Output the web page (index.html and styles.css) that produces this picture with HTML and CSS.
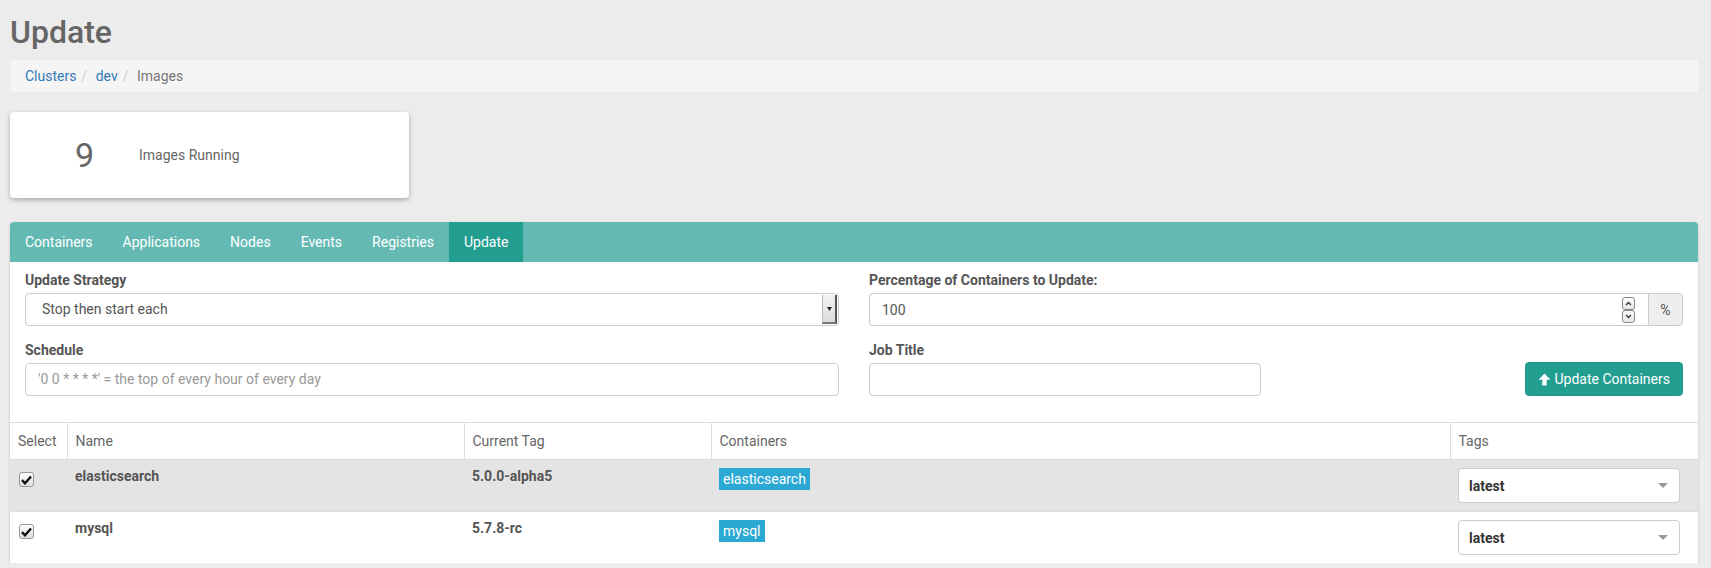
FILE: index.html
```html
<!DOCTYPE html>
<html lang="en">
<head>
<meta charset="utf-8">
<title>Update</title>
<link rel="stylesheet" href="styles.css">
</head>
<body>
<div class="page">
  <h1 class="title">Update</h1>
  <ol class="breadcrumb">
    <li><a href="#">Clusters</a></li>
    <li><a href="#">dev</a></li>
    <li class="active">Images</li>
  </ol>

  <div class="stat-card">
    <div class="stat-num">9</div>
    <div class="stat-label">Images Running</div>
  </div>

  <div class="panel">
    <ul class="tabs">
      <li class="tab">Containers</li>
      <li class="tab">Applications</li>
      <li class="tab">Nodes</li>
      <li class="tab">Events</li>
      <li class="tab">Registries</li>
      <li class="tab active">Update</li>
    </ul>
    <div class="panel-body">
      <div class="form-grid">
        <div class="field">
          <label class="label">Update Strategy</label>
          <div class="native-select">
            <span class="native-select-text">Stop then start each</span>
            <span class="native-select-btn"><svg width="5" height="4" viewBox="0 0 5 4"><path d="M0 0H5L2.5 4Z" fill="#222"/></svg></span>
          </div>
        </div>
        <div class="field">
          <label class="label">Percentage of Containers to Update:</label>
          <div class="input-group">
            <div class="num-input">
              <span class="num-value">100</span>
              <span class="spinner">
                <span class="spin-btn"><svg width="7" height="5" viewBox="0 0 7 5"><path d="M1 4L3.5 1.5L6 4" fill="none" stroke="#333" stroke-width="1.3"/></svg></span>
                <span class="spin-btn"><svg width="7" height="5" viewBox="0 0 7 5"><path d="M1 1L3.5 3.5L6 1" fill="none" stroke="#333" stroke-width="1.3"/></svg></span>
              </span>
            </div>
            <span class="addon">%</span>
          </div>
        </div>
        <div class="field">
          <label class="label">Schedule</label>
          <div class="text-input placeholder">'0 0 * * * *' = the top of every hour of every day</div>
        </div>
        <div class="sub-grid">
          <div class="field">
            <label class="label">Job Title</label>
            <div class="text-input"></div>
          </div>
          <div class="btn-cell">
            <button class="btn-update"><svg class="arrow" width="13" height="13" viewBox="0 0 13 13"><path d="M6.5 0.5L12.5 6.8H8.7V12.5H4.3V6.8H0.5Z" fill="#fff"/></svg>Update Containers</button>
          </div>
        </div>
      </div>
    </div>

    <table class="images">
      <colgroup>
        <col class="c-select">
        <col class="c-name">
        <col class="c-tag">
        <col class="c-cont">
        <col class="c-tags">
      </colgroup>
      <thead>
        <tr>
          <th>Select</th>
          <th>Name</th>
          <th>Current Tag</th>
          <th>Containers</th>
          <th>Tags</th>
        </tr>
      </thead>
      <tbody>
        <tr class="row-hl">
          <td><span class="check"><svg width="11" height="10" viewBox="0 0 11 10"><path d="M1 5.2L4 8.3L10 1.5" fill="none" stroke="#111" stroke-width="2.4"/></svg></span></td>
          <td class="bold">elasticsearch</td>
          <td class="bold">5.0.0-alpha5</td>
          <td><span class="badge">elasticsearch</span></td>
          <td><div class="tag-select"><span>latest</span><span class="caret"></span></div></td>
        </tr>
        <tr>
          <td><span class="check"><svg width="11" height="10" viewBox="0 0 11 10"><path d="M1 5.2L4 8.3L10 1.5" fill="none" stroke="#111" stroke-width="2.4"/></svg></span></td>
          <td class="bold">mysql</td>
          <td class="bold">5.7.8-rc</td>
          <td><span class="badge">mysql</span></td>
          <td><div class="tag-select"><span>latest</span><span class="caret"></span></div></td>
        </tr>
      </tbody>
    </table>
  </div>
</div>
</body>
</html>
```

FILE: styles.css
```css
* { box-sizing: border-box; }

html, body {
  margin: 0;
  padding: 0;
  background: #ececec;
  font-family: Roboto, "Liberation Sans", Arial, sans-serif;
  font-size: 14px;
  color: #555;
}

.page {
  padding: 0 13px 0 10px;
}

.title {
  margin: 14px 0 10px 0;
  font-size: 32px;
  line-height: 36px;
  font-weight: 500;
  color: #666;
}

.breadcrumb {
  list-style: none;
  margin: 0 0 20px 0;
  padding: 8px 15px;
  line-height: 16px;
  background: #f5f5f5;
  border-radius: 4px;
  display: flex;
}

.breadcrumb li + li::before {
  content: "/\00a0";
  padding: 0 5px;
  color: #ccc;
}

.breadcrumb a {
  color: #337ab7;
  text-decoration: none;
}

.breadcrumb .active {
  color: #777;
}

.stat-card {
  width: 399px;
  height: 86px;
  background: #fff;
  border-radius: 4px;
  box-shadow: 0 2px 5px rgba(0, 0, 0, 0.28);
  display: flex;
  align-items: center;
  padding-left: 20px;
  margin-bottom: 24px;
}

.stat-num {
  width: 109px;
  text-align: center;
  font-size: 34px;
  font-weight: 400;
  color: #666;
  line-height: 40px;
}

.stat-label {
  color: #666;
  font-size: 14px;
  line-height: 20px;
}

.panel {
  background: #fff;
  border-radius: 4px 4px 0 0;
  box-shadow: 0 1px 3px rgba(0, 0, 0, 0.18);
}

.tabs {
  list-style: none;
  margin: 0;
  padding: 0;
  display: flex;
  height: 40px;
  background: #64bab2;
  border-radius: 4px 4px 0 0;
  overflow: hidden;
}

.tab {
  padding: 0 15px;
  line-height: 40px;
  color: #fff;
}

.tab.active {
  background: #229e90;
}

.panel-body {
  padding: 8px 15px 26px 15px;
}

.form-grid {
  display: grid;
  grid-template-columns: 1fr 1fr;
  column-gap: 30px;
  row-gap: 14px;
}

.label {
  display: block;
  font-weight: 700;
  line-height: 20px;
  margin-bottom: 3px;
  color: #555;
}

.native-select {
  height: 33px;
  border: 1px solid #ccc;
  border-radius: 4px;
  display: flex;
  align-items: stretch;
  background: #fff;
}

.native-select-text {
  flex: 1;
  padding-left: 16px;
  line-height: 31px;
  color: #555;
}

.native-select-btn {
  width: 15px;
  margin: 1px 1px 1px 0;
  background: linear-gradient(#f3f3f3, #dcdcdc);
  border-left: 1px solid #bbb;
  border-right: 2px solid #555;
  border-bottom: 2px solid #777;
  display: flex;
  align-items: center;
  justify-content: center;
}

.input-group {
  display: flex;
  height: 33px;
}

.num-input {
  flex: 1;
  border: 1px solid #ccc;
  border-right: 0;
  border-radius: 4px 0 0 4px;
  display: flex;
  align-items: center;
  padding: 0 13px 0 12px;
}

.num-value {
  flex: 1;
  color: #555;
}

.spinner {
  display: flex;
  flex-direction: column;
}

.spin-btn {
  width: 13px;
  height: 13px;
  border: 1px solid #888;
  border-radius: 3px;
  background: linear-gradient(#fdfdfd, #e6e6e6);
  display: flex;
  align-items: center;
  justify-content: center;
}

.addon {
  width: 35px;
  background: #eee;
  border: 1px solid #ccc;
  border-radius: 0 4px 4px 0;
  color: #555;
  display: flex;
  align-items: center;
  justify-content: center;
}

.text-input {
  height: 33px;
  border: 1px solid #ccc;
  border-radius: 4px;
  background: #fff;
  padding: 0 12px;
  line-height: 31px;
}

.placeholder {
  color: #999;
}

.sub-grid {
  display: grid;
  grid-template-columns: 1fr 1fr;
  column-gap: 30px;
}

.btn-cell {
  display: flex;
  justify-content: flex-end;
  align-items: flex-end;
}

.btn-update {
  height: 34px;
  padding: 0 12px 0 12px;
  border: 1px solid #1f9588;
  border-radius: 4px;
  background: #229e90;
  color: #fff;
  font-family: inherit;
  font-size: 14px;
  display: flex;
  align-items: center;
}

.arrow {
  margin-right: 4px;
}

.images {
  width: 100%;
  border-collapse: collapse;
  table-layout: fixed;
}

.c-select { width: 57px; }
.c-name { width: 397px; }
.c-tag { width: 247px; }
.c-cont { width: 739px; }
.c-tags { width: 248px; }

.images th {
  text-align: left;
  font-weight: 400;
  color: #666;
  padding: 8px;
  line-height: 20px;
  border-top: 1px solid #ddd;
  border-bottom: 1px solid #ddd;
}

.images th + th {
  border-left: 1px solid #ddd;
}

.images td {
  padding: 8px;
  vertical-align: top;
  line-height: 16px;
  border-top: 1px solid #ddd;
}

.row-hl td {
  background: #e4e4e4;
  border-top: 0;
}

.bold {
  font-weight: 700;
  color: #555;
}

.check {
  display: flex;
  align-items: center;
  justify-content: center;
  width: 15px;
  height: 15px;
  margin: 4px 0 0 1px;
  border: 1px solid #999;
  border-radius: 3px;
  background: linear-gradient(#fff, #ddd);
}

.badge {
  display: block;
  width: max-content;
  padding: 3px 4px;
  line-height: 16px;
  background: #2ba9d4;
  color: #fff;
}

.tag-select {
  width: 222px;
  height: 35px;
  border: 1px solid #ccc;
  border-radius: 4px;
  background: #fff;
  display: flex;
  align-items: center;
  justify-content: space-between;
  padding: 0 11px 0 10px;
  font-weight: 700;
  color: #333;
}

.caret {
  width: 0;
  height: 0;
  border-left: 5px solid transparent;
  border-right: 5px solid transparent;
  border-top: 5px solid #999;
}
```
